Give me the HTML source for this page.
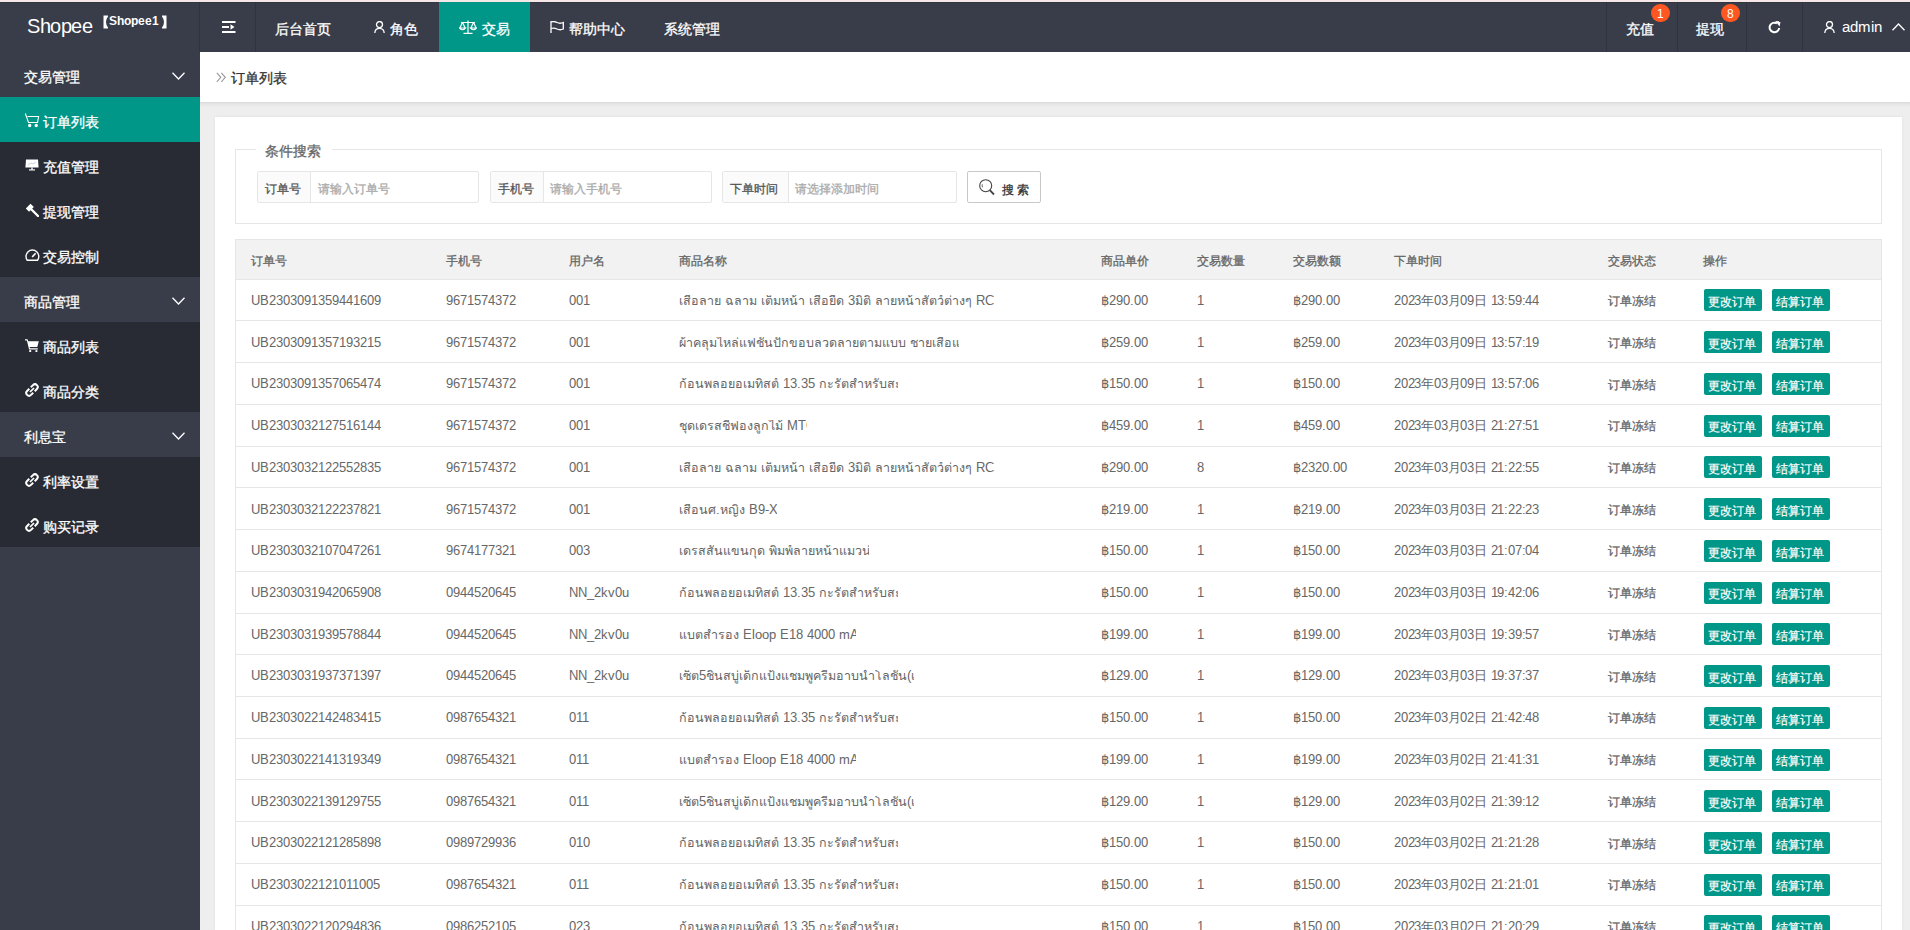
<!DOCTYPE html><html><head><meta charset="utf-8"><title>订单列表</title><style>@font-face{font-family:"Liberation Sans";src:local("Liberation Sans"),local("LiberationSans");font-weight:400}
@font-face{font-family:"Liberation Sans";src:local("Liberation Sans Bold"),local("LiberationSans-Bold");font-weight:700}
@font-face{font-family:"Liberation Sans";src:local("Liberation Sans"),local("LiberationSans");size-adjust:133.33%;unicode-range:U+2E80-9FFF,U+F900-FAFF,U+FF00-FFEF;font-weight:400}
@font-face{font-family:"Liberation Sans";src:local("Liberation Sans Bold"),local("LiberationSans-Bold");size-adjust:133.33%;unicode-range:U+2E80-9FFF,U+F900-FAFF,U+FF00-FFEF;font-weight:700}
@font-face{font-family:"Liberation Sans";src:local("Liberation Sans"),local("LiberationSans");size-adjust:72%;unicode-range:U+0E00-0E3E,U+0E40-0E7F;font-weight:400}

*{box-sizing:border-box}
html,body{margin:0;padding:0}
body{width:1910px;height:930px;overflow:hidden;position:relative;background:#eeeeee;font-family:"Liberation Sans",sans-serif;color:#666}
.a{position:absolute}
.t{position:absolute;white-space:nowrap;line-height:1}
.sep{position:absolute;top:0;width:1px;height:50px;background:#30333d}
.w14{color:#fff;font-size:14px;-webkit-text-stroke:0.3px #fff}
.grp{position:absolute;left:0;width:200px;height:45px;background:#393d49}
.sub{position:absolute;left:0;width:200px;background:#282b33}
.fs{position:absolute;left:235px;top:149px;width:1647px;height:75px;border:1px solid #e6e6e6}
.ig{position:absolute;top:171px;height:32px;border:1px solid #e6e6e6;background:#fff;border-radius:2px}
.ig .lb{position:absolute;left:0;top:0;height:30px;background:#fbfbfb;border-right:1px solid #e6e6e6}
.row{position:absolute;left:235px;width:1647px;border-left:1px solid #e6e6e6;border-right:1px solid #e6e6e6;border-bottom:1px solid #e6e6e6}
.td{color:#666;font-size:12.5px}
.c12{font-size:12px;color:#666;-webkit-text-stroke:0.3px #666}
.ck{-webkit-text-stroke:0.3px currentColor}
.btn{position:absolute;width:58px;height:22px;background:#009688;border-radius:2px}
.bt{color:#fff;font-size:12px;-webkit-text-stroke:0.2px #fff}
.th{overflow:hidden}
</style></head><body>
<div class="a" style="left:0;top:0;width:1910px;height:2px;background:#f5e8e6"></div>
<div class="a" style="left:0;top:2px;width:1910px;height:50px;background:#393d49">
<div class="a" style="left:0;top:0;width:1910px;height:1px;background:#33353f"></div>
<div class="sep" style="left:199px"></div><div class="sep" style="left:255px"></div>
<div class="a" style="left:439px;top:0;width:91px;height:50px;background:#009688"></div>
<div class="sep" style="left:1606px"></div>
<div class="sep" style="left:1677px"></div>
<div class="sep" style="left:1746px"></div>
<div class="sep" style="left:1802px"></div>
</div>
<div class="t" style="left:27px;top:16px;font-size:20px;color:#fff;letter-spacing:-0.4px">Shopee</div>
<svg class="a" style="left:103px;top:15px" width="64" height="14" viewBox="0 0 64 14"><path d="M0.5 0.5 H5 V1.5 Q3 4 3 7 Q3 10 5 12.5 V13.5 H0.5Z" fill="#fff"/><path d="M63.5 0.5 H59 V1.5 Q61 4 61 7 Q61 10 59 12.5 V13.5 H63.5Z" fill="#fff"/></svg>
<div class="t" style="left:109px;top:15px;font-size:12px;color:#fff;font-weight:bold">Shopee1</div>
<svg class="a" style="left:221.5px;top:21px" width="14" height="12" viewBox="0 0 14 12"><rect x="0" y="0" width="13.5" height="2" fill="#fff"/><rect x="0" y="5" width="7" height="2" fill="#fff"/><rect x="0" y="10" width="13.5" height="2" fill="#fff"/><path d="M8.5 3.3 L12.5 6 L8.5 8.7Z" fill="#fff"/></svg>
<div class="t w14" style="left:275px;top:21.5px">后台首页</div>
<div class="t w14" style="left:390px;top:21.5px">角色</div>
<div class="t w14" style="left:481.5px;top:21.5px">交易</div>
<div class="t w14" style="left:568.5px;top:21.5px">帮助中心</div>
<div class="t w14" style="left:664px;top:21.5px">系统管理</div>
<div class="t w14" style="left:1626px;top:21.5px">充值</div>
<div class="t w14" style="left:1696px;top:21.5px">提现</div>
<svg class="a" style="left:373.8px;top:20.5px" width="11" height="12.5" viewBox="0 0 11 12.5" fill="none" stroke="#fff" stroke-width="1.3"><circle cx="5.5" cy="3.6" r="3"/><path d="M0.8 12.5 Q0.8 7.3 5.5 7.3 Q10.2 7.3 10.2 12.5"/></svg>
<svg class="a" style="left:1824.2px;top:20.5px" width="11" height="12.5" viewBox="0 0 11 12.5" fill="none" stroke="#fff" stroke-width="1.3"><circle cx="5.5" cy="3.6" r="3"/><path d="M0.8 12.5 Q0.8 7.3 5.5 7.3 Q10.2 7.3 10.2 12.5"/></svg>
<svg class="a" style="left:458.5px;top:20px" width="18" height="14" viewBox="0 0 18 14" fill="none" stroke="#fff" stroke-width="1.2"><path d="M9 0.5 V13 M4.5 13.3 H13.5 M2 2.5 H16"/><path d="M3.5 2.5 L0.8 8 M3.5 2.5 L6.2 8 M14.5 2.5 L11.8 8 M14.5 2.5 L17.2 8"/><path d="M0.6 8 Q3.5 11.5 6.4 8Z M11.6 8 Q14.5 11.5 17.4 8Z"/></svg>
<svg class="a" style="left:550px;top:21px" width="14" height="12" viewBox="0 0 14 12" fill="none" stroke="#fff" stroke-width="1.3"><path d="M1 0 V12"/><path d="M1 1 Q4 0 7 1.5 Q10 3 13.3 1.5 V8 Q10 9.5 7 8 Q4 6.5 1 7.5"/></svg>
<div class="a" style="left:1651.0px;top:4.2px;width:19px;height:18px;border-radius:9.5px;background:#ff5722"></div>
<div class="t" style="left:1657.3px;top:8.5px;font-size:11.5px;color:#fff">1</div>
<div class="a" style="left:1721.1px;top:4.2px;width:19px;height:18px;border-radius:9.5px;background:#ff5722"></div>
<div class="t" style="left:1727.3999999999999px;top:8.5px;font-size:11.5px;color:#fff">8</div>
<svg class="a" style="left:1767.5px;top:20.5px" width="13" height="13" viewBox="0 0 13 13" fill="none" stroke="#fff" stroke-width="2"><path d="M11.2 7 A4.8 4.8 0 1 1 9 2.4"/><path d="M7.2 0 L12.6 0.3 L11.6 5.4Z" fill="#fff" stroke="none"/></svg>
<div class="t" style="left:1842px;top:19px;font-size:15px;color:#fff">admin</div>
<svg class="a" style="left:1891.5px;top:22.5px" width="13" height="8" viewBox="0 0 13 8" fill="none" stroke="#fff" stroke-width="1.3"><path d="M0.5 7.3 L6.5 1 L12.5 7.3"/></svg>
<div class="a" style="left:0;top:52px;width:200px;height:878px;background:#393d49"></div>
<div class="grp" style="top:52px"></div>
<div class="t w14" style="left:23.5px;top:70.3px">交易管理</div>
<svg class="a" style="left:171.5px;top:71.6px" width="13" height="8" viewBox="0 0 13 8" fill="none" stroke="#fff" stroke-width="1.3"><path d="M0.5 0.7 L6.5 7 L12.5 0.7"/></svg>
<div class="sub" style="top:97px;height:180px"></div>
<div class="a" style="left:0;top:97px;width:200px;height:45px;background:#009688"></div>
<div class="t w14" style="left:43.3px;top:114.5px">订单列表</div>
<div class="t w14" style="left:43.3px;top:159.5px">充值管理</div>
<div class="t w14" style="left:43.3px;top:204.5px">提现管理</div>
<div class="t w14" style="left:43.3px;top:249.5px">交易控制</div>
<div class="grp" style="top:277px"></div>
<div class="t w14" style="left:23.5px;top:295.3px">商品管理</div>
<svg class="a" style="left:171.5px;top:296.6px" width="13" height="8" viewBox="0 0 13 8" fill="none" stroke="#fff" stroke-width="1.3"><path d="M0.5 0.7 L6.5 7 L12.5 0.7"/></svg>
<div class="sub" style="top:322px;height:90px"></div>
<div class="t w14" style="left:43.3px;top:339.5px">商品列表</div>
<div class="t w14" style="left:43.3px;top:384.5px">商品分类</div>
<div class="grp" style="top:412px"></div>
<div class="t w14" style="left:23.5px;top:430.3px">利息宝</div>
<svg class="a" style="left:171.5px;top:431.6px" width="13" height="8" viewBox="0 0 13 8" fill="none" stroke="#fff" stroke-width="1.3"><path d="M0.5 0.7 L6.5 7 L12.5 0.7"/></svg>
<div class="sub" style="top:457px;height:90px"></div>
<div class="t w14" style="left:43.3px;top:474.5px">利率设置</div>
<div class="t w14" style="left:43.3px;top:519.5px">购买记录</div>
<svg class="a" style="left:24.5px;top:112.5px" width="15" height="15" viewBox="0 0 15 15" fill="none" stroke="#fff" stroke-width="1.1"><path d="M0.3 0.5 L3.5 9.5 H12.5 L13.6 3.5 H2.5"/><circle cx="4.7" cy="12.5" r="1.1" fill="#fff"/><circle cx="11.2" cy="12.5" r="1.1" fill="#fff"/></svg>
<svg class="a" style="left:25px;top:159px" width="14" height="12" viewBox="0 0 14 12"><path d="M1 0.5 H13 L13.6 8.5 H0.4Z" fill="#fff"/><rect x="6.3" y="8.5" width="1.4" height="2" fill="#fff"/><rect x="4" y="10.3" width="6" height="1.2" fill="#fff"/><path d="M3 6 L6 4 L8 5 L11 3" stroke="#aab" stroke-width="0.6" fill="none"/></svg>
<svg class="a" style="left:25px;top:203px" width="14" height="14" viewBox="0 0 14 14"><path d="M0.8 5.5 L5.5 0.8 L8.8 4.1 L4.1 8.8Z" fill="#fff"/><path d="M6.5 6.5 L13 13" stroke="#fff" stroke-width="2.4" stroke-linecap="round"/></svg>
<svg class="a" style="left:24.5px;top:248px" width="15" height="14" viewBox="0 0 15 14" fill="none" stroke="#fff" stroke-width="1.4"><path d="M2.3 12.3 A6.4 6.4 0 1 1 12.5 12.3 Z"/><path d="M7.2 9 L10.6 5.2" stroke-width="1.7"/></svg>
<svg class="a" style="left:25px;top:339px" width="14" height="13" viewBox="0 0 14 13"><path d="M0 0.3 H2.5 L3.3 2.2 H13.8 L12.3 8 H4.6 L5 9.3 H12.8 V10.4 H4.1 L1.9 1.4 H0Z" fill="#fff"/><circle cx="5.2" cy="12" r="1.1" fill="#fff"/><circle cx="11.4" cy="12" r="1.1" fill="#fff"/></svg>
<svg class="a" style="left:25px;top:382.5px" width="14" height="14" viewBox="0 0 14 14" fill="none" stroke="#fff" stroke-width="2"><path d="M5.8 4.3 L8 2.1 A2.4 2.4 0 0 1 11.9 6 L9.7 8.2"/><path d="M8.2 9.7 L6 11.9 A2.4 2.4 0 0 1 2.1 8 L4.3 5.8"/><path d="M5 9 L9 5" stroke-width="1.7"/></svg>
<svg class="a" style="left:25px;top:472.5px" width="14" height="14" viewBox="0 0 14 14" fill="none" stroke="#fff" stroke-width="2"><path d="M5.8 4.3 L8 2.1 A2.4 2.4 0 0 1 11.9 6 L9.7 8.2"/><path d="M8.2 9.7 L6 11.9 A2.4 2.4 0 0 1 2.1 8 L4.3 5.8"/><path d="M5 9 L9 5" stroke-width="1.7"/></svg>
<svg class="a" style="left:25px;top:517.5px" width="14" height="14" viewBox="0 0 14 14" fill="none" stroke="#fff" stroke-width="2"><path d="M5.8 4.3 L8 2.1 A2.4 2.4 0 0 1 11.9 6 L9.7 8.2"/><path d="M8.2 9.7 L6 11.9 A2.4 2.4 0 0 1 2.1 8 L4.3 5.8"/><path d="M5 9 L9 5" stroke-width="1.7"/></svg>
<div class="a" style="left:200px;top:52px;width:1710px;height:50px;background:#fff;"></div>
<div class="a" style="left:200px;top:102px;width:1710px;height:5px;background:linear-gradient(#d9d9d9,#e4e4e4 35%,#eeeeee)"></div>
<svg class="a" style="left:215.5px;top:72px" width="11" height="11" viewBox="0 0 11 11" fill="none" stroke="#999" stroke-width="1.1"><path d="M0.8 0.8 L4.8 5.3 L0.8 9.8 M5.3 0.8 L9.3 5.3 L5.3 9.8"/></svg>
<div class="t ck" style="left:231px;top:71.4px;font-size:14px;color:#333">订单列表</div>
<div class="a" style="left:215px;top:117px;width:1687px;height:813px;background:#fff;box-shadow:0 0 3px rgba(0,0,0,.07)"></div>
<div class="fs"></div>
<div class="a" style="left:256px;top:140px;width:76px;height:18px;background:#fff"></div>
<div class="t ck" style="left:265px;top:143.5px;font-size:14px;color:#666">条件搜索</div>
<div class="ig" style="left:256.5px;width:222.0px"><div class="lb" style="width:53.5px"></div></div>
<div class="t ck" style="left:264.5px;top:183.3px;font-size:12px;color:#555">订单号</div>
<div class="t ck" style="left:317.5px;top:183.3px;font-size:12px;color:#aaa">请输入订单号</div>
<div class="ig" style="left:489.5px;width:222.10000000000002px"><div class="lb" style="width:53.0px"></div></div>
<div class="t ck" style="left:497.5px;top:183.3px;font-size:12px;color:#555">手机号</div>
<div class="t ck" style="left:550px;top:183.3px;font-size:12px;color:#aaa">请输入手机号</div>
<div class="ig" style="left:722.3px;width:234.30000000000007px"><div class="lb" style="width:65.5px"></div></div>
<div class="t ck" style="left:730.3px;top:183.3px;font-size:12px;color:#555">下单时间</div>
<div class="t ck" style="left:795.3px;top:183.3px;font-size:12px;color:#aaa">请选择添加时间</div>
<div class="a" style="left:967px;top:171px;width:74px;height:32px;border:1px solid #c9c9c9;border-radius:2px;background:#fff"></div>
<svg class="a" style="left:979px;top:178.5px" width="17" height="17" viewBox="0 0 17 17" fill="none" stroke="#444" stroke-width="1.1"><circle cx="6.7" cy="6.7" r="6"/><path d="M10.8 11.2 L15 15.5" stroke-width="1.8"/><path d="M3.3 5.3 A3.6 3.6 0 0 0 3.6 8.3" stroke="#556" stroke-width="0.9"/></svg>
<div class="t ck" style="left:1001.6px;top:183.6px;font-size:12px;color:#333;letter-spacing:3.7px">搜索</div>
<div class="a" style="left:235px;top:239px;width:1647px;height:40.69999999999999px;background:#f2f2f2;border:1px solid #e6e6e6"></div>
<div class="t c12" style="left:250.5px;top:255px">订单号</div>
<div class="t c12" style="left:445.7px;top:255px">手机号</div>
<div class="t c12" style="left:569px;top:255px">用户名</div>
<div class="t c12" style="left:678.7px;top:255px">商品名称</div>
<div class="t c12" style="left:1101.3px;top:255px">商品单价</div>
<div class="t c12" style="left:1197px;top:255px">交易数量</div>
<div class="t c12" style="left:1293px;top:255px">交易数额</div>
<div class="t c12" style="left:1394px;top:255px">下单时间</div>
<div class="t c12" style="left:1607.5px;top:255px">交易状态</div>
<div class="t c12" style="left:1703px;top:255px">操作</div>
<div class="row" style="top:278.70px;height:42.73px"></div>
<div class="t td" style="left:250.5px;top:294.87px">UB2303091359441609</div>
<div class="t td" style="left:445.7px;top:294.87px">9671574372</div>
<div class="t td" style="left:569px;top:294.87px">001</div>
<div class="t td th" style="left:679.2px;top:294.87px;width:315px;height:14px">เสื้อลาย ฉลาม เต็มหน้า เสื้อยืด 3มิติ ลายหน้าสัตว์ต่างๆ RCA223</div>
<div class="t td" style="left:1101.3px;top:294.87px">฿290.00</div>
<div class="t td" style="left:1197px;top:294.87px">1</div>
<div class="t td" style="left:1293px;top:294.87px">฿290.00</div>
<div class="t td" style="left:1394px;top:294.87px;letter-spacing:-0.2px">2023年03月09日 13:59:44</div>
<div class="t c12" style="left:1607.5px;top:295.06px">订单冻结</div>
<div class="btn" style="left:1704px;top:289.46px"></div>
<div class="t bt" style="left:1708px;top:296.26px">更改订单</div>
<div class="btn" style="left:1772px;top:289.46px"></div>
<div class="t bt" style="left:1776px;top:296.26px">结算订单</div>
<div class="row" style="top:320.43px;height:42.73px"></div>
<div class="t td" style="left:250.5px;top:336.60px">UB2303091357193215</div>
<div class="t td" style="left:445.7px;top:336.60px">9671574372</div>
<div class="t td" style="left:569px;top:336.60px">001</div>
<div class="t td th" style="left:679.2px;top:336.60px;width:280px;height:14px">ผ้าคลุมไหล่แฟชั่นปักขอบลวดลายตามแบบ ชายเสื้อแต่งพู่</div>
<div class="t td" style="left:1101.3px;top:336.60px">฿259.00</div>
<div class="t td" style="left:1197px;top:336.60px">1</div>
<div class="t td" style="left:1293px;top:336.60px">฿259.00</div>
<div class="t td" style="left:1394px;top:336.60px;letter-spacing:-0.2px">2023年03月09日 13:57:19</div>
<div class="t c12" style="left:1607.5px;top:336.80px">订单冻结</div>
<div class="btn" style="left:1704px;top:331.19px"></div>
<div class="t bt" style="left:1708px;top:338.00px">更改订单</div>
<div class="btn" style="left:1772px;top:331.19px"></div>
<div class="t bt" style="left:1776px;top:338.00px">结算订单</div>
<div class="row" style="top:362.16px;height:42.73px"></div>
<div class="t td" style="left:250.5px;top:378.32px">UB2303091357065474</div>
<div class="t td" style="left:445.7px;top:378.32px">9671574372</div>
<div class="t td" style="left:569px;top:378.32px">001</div>
<div class="t td th" style="left:679.2px;top:378.32px;width:219px;height:14px">ก้อนพลอยอเมทิสต์ 13.35 กะรัตสำหรับสะสม</div>
<div class="t td" style="left:1101.3px;top:378.32px">฿150.00</div>
<div class="t td" style="left:1197px;top:378.32px">1</div>
<div class="t td" style="left:1293px;top:378.32px">฿150.00</div>
<div class="t td" style="left:1394px;top:378.32px;letter-spacing:-0.2px">2023年03月09日 13:57:06</div>
<div class="t c12" style="left:1607.5px;top:378.52px">订单冻结</div>
<div class="btn" style="left:1704px;top:372.92px"></div>
<div class="t bt" style="left:1708px;top:379.72px">更改订单</div>
<div class="btn" style="left:1772px;top:372.92px"></div>
<div class="t bt" style="left:1776px;top:379.72px">结算订单</div>
<div class="row" style="top:403.89px;height:42.73px"></div>
<div class="t td" style="left:250.5px;top:420.06px">UB2303032127516144</div>
<div class="t td" style="left:445.7px;top:420.06px">9671574372</div>
<div class="t td" style="left:569px;top:420.06px">001</div>
<div class="t td th" style="left:679.2px;top:420.06px;width:128px;height:14px">ชุดเดรสชีฟองลูกไม้ MTO</div>
<div class="t td" style="left:1101.3px;top:420.06px">฿459.00</div>
<div class="t td" style="left:1197px;top:420.06px">1</div>
<div class="t td" style="left:1293px;top:420.06px">฿459.00</div>
<div class="t td" style="left:1394px;top:420.06px;letter-spacing:-0.2px">2023年03月03日 21:27:51</div>
<div class="t c12" style="left:1607.5px;top:420.25px">订单冻结</div>
<div class="btn" style="left:1704px;top:414.65px"></div>
<div class="t bt" style="left:1708px;top:421.45px">更改订单</div>
<div class="btn" style="left:1772px;top:414.65px"></div>
<div class="t bt" style="left:1776px;top:421.45px">结算订单</div>
<div class="row" style="top:445.62px;height:42.73px"></div>
<div class="t td" style="left:250.5px;top:461.79px">UB2303032122552835</div>
<div class="t td" style="left:445.7px;top:461.79px">9671574372</div>
<div class="t td" style="left:569px;top:461.79px">001</div>
<div class="t td th" style="left:679.2px;top:461.79px;width:315px;height:14px">เสื้อลาย ฉลาม เต็มหน้า เสื้อยืด 3มิติ ลายหน้าสัตว์ต่างๆ RCA223</div>
<div class="t td" style="left:1101.3px;top:461.79px">฿290.00</div>
<div class="t td" style="left:1197px;top:461.79px">8</div>
<div class="t td" style="left:1293px;top:461.79px">฿2320.00</div>
<div class="t td" style="left:1394px;top:461.79px;letter-spacing:-0.2px">2023年03月03日 21:22:55</div>
<div class="t c12" style="left:1607.5px;top:461.99px">订单冻结</div>
<div class="btn" style="left:1704px;top:456.38px"></div>
<div class="t bt" style="left:1708px;top:463.19px">更改订单</div>
<div class="btn" style="left:1772px;top:456.38px"></div>
<div class="t bt" style="left:1776px;top:463.19px">结算订单</div>
<div class="row" style="top:487.35px;height:42.73px"></div>
<div class="t td" style="left:250.5px;top:503.51px">UB2303032122237821</div>
<div class="t td" style="left:445.7px;top:503.51px">9671574372</div>
<div class="t td" style="left:569px;top:503.51px">001</div>
<div class="t td th" style="left:679.2px;top:503.51px;width:98px;height:14px">เสื้อนศ.หญิง B9-XL</div>
<div class="t td" style="left:1101.3px;top:503.51px">฿219.00</div>
<div class="t td" style="left:1197px;top:503.51px">1</div>
<div class="t td" style="left:1293px;top:503.51px">฿219.00</div>
<div class="t td" style="left:1394px;top:503.51px;letter-spacing:-0.2px">2023年03月03日 21:22:23</div>
<div class="t c12" style="left:1607.5px;top:503.71px">订单冻结</div>
<div class="btn" style="left:1704px;top:498.11px"></div>
<div class="t bt" style="left:1708px;top:504.91px">更改订单</div>
<div class="btn" style="left:1772px;top:498.11px"></div>
<div class="t bt" style="left:1776px;top:504.91px">结算订单</div>
<div class="row" style="top:529.08px;height:42.73px"></div>
<div class="t td" style="left:250.5px;top:545.24px">UB2303032107047261</div>
<div class="t td" style="left:445.7px;top:545.24px">9674177321</div>
<div class="t td" style="left:569px;top:545.24px">003</div>
<div class="t td th" style="left:679.2px;top:545.24px;width:190px;height:14px">เดรสสั้นแขนกุด พิมพ์ลายหน้าแมวน่ารัก</div>
<div class="t td" style="left:1101.3px;top:545.24px">฿150.00</div>
<div class="t td" style="left:1197px;top:545.24px">1</div>
<div class="t td" style="left:1293px;top:545.24px">฿150.00</div>
<div class="t td" style="left:1394px;top:545.24px;letter-spacing:-0.2px">2023年03月03日 21:07:04</div>
<div class="t c12" style="left:1607.5px;top:545.44px">订单冻结</div>
<div class="btn" style="left:1704px;top:539.84px"></div>
<div class="t bt" style="left:1708px;top:546.64px">更改订单</div>
<div class="btn" style="left:1772px;top:539.84px"></div>
<div class="t bt" style="left:1776px;top:546.64px">结算订单</div>
<div class="row" style="top:570.81px;height:42.73px"></div>
<div class="t td" style="left:250.5px;top:586.97px">UB2303031942065908</div>
<div class="t td" style="left:445.7px;top:586.97px">0944520645</div>
<div class="t td" style="left:569px;top:586.97px">NN_2kv0u</div>
<div class="t td th" style="left:679.2px;top:586.97px;width:219px;height:14px">ก้อนพลอยอเมทิสต์ 13.35 กะรัตสำหรับสะสม</div>
<div class="t td" style="left:1101.3px;top:586.97px">฿150.00</div>
<div class="t td" style="left:1197px;top:586.97px">1</div>
<div class="t td" style="left:1293px;top:586.97px">฿150.00</div>
<div class="t td" style="left:1394px;top:586.97px;letter-spacing:-0.2px">2023年03月03日 19:42:06</div>
<div class="t c12" style="left:1607.5px;top:587.17px">订单冻结</div>
<div class="btn" style="left:1704px;top:581.57px"></div>
<div class="t bt" style="left:1708px;top:588.38px">更改订单</div>
<div class="btn" style="left:1772px;top:581.57px"></div>
<div class="t bt" style="left:1776px;top:588.38px">结算订单</div>
<div class="row" style="top:612.54px;height:42.73px"></div>
<div class="t td" style="left:250.5px;top:628.70px">UB2303031939578844</div>
<div class="t td" style="left:445.7px;top:628.70px">0944520645</div>
<div class="t td" style="left:569px;top:628.70px">NN_2kv0u</div>
<div class="t td th" style="left:679.2px;top:628.70px;width:177px;height:14px">แบตสำรอง Eloop E18 4000 mAh</div>
<div class="t td" style="left:1101.3px;top:628.70px">฿199.00</div>
<div class="t td" style="left:1197px;top:628.70px">1</div>
<div class="t td" style="left:1293px;top:628.70px">฿199.00</div>
<div class="t td" style="left:1394px;top:628.70px;letter-spacing:-0.2px">2023年03月03日 19:39:57</div>
<div class="t c12" style="left:1607.5px;top:628.90px">订单冻结</div>
<div class="btn" style="left:1704px;top:623.30px"></div>
<div class="t bt" style="left:1708px;top:630.11px">更改订单</div>
<div class="btn" style="left:1772px;top:623.30px"></div>
<div class="t bt" style="left:1776px;top:630.11px">结算订单</div>
<div class="row" style="top:654.27px;height:42.73px"></div>
<div class="t td" style="left:250.5px;top:670.43px">UB2303031937371397</div>
<div class="t td" style="left:445.7px;top:670.43px">0944520645</div>
<div class="t td" style="left:569px;top:670.43px">NN_2kv0u</div>
<div class="t td th" style="left:679.2px;top:670.43px;width:235px;height:14px">เซ็ต5ชิ้นสบู่เด็กแป้งแชมพูครีมอาบน้ำโลชั่น(เล็ก)</div>
<div class="t td" style="left:1101.3px;top:670.43px">฿129.00</div>
<div class="t td" style="left:1197px;top:670.43px">1</div>
<div class="t td" style="left:1293px;top:670.43px">฿129.00</div>
<div class="t td" style="left:1394px;top:670.43px;letter-spacing:-0.2px">2023年03月03日 19:37:37</div>
<div class="t c12" style="left:1607.5px;top:670.63px">订单冻结</div>
<div class="btn" style="left:1704px;top:665.03px"></div>
<div class="t bt" style="left:1708px;top:671.84px">更改订单</div>
<div class="btn" style="left:1772px;top:665.03px"></div>
<div class="t bt" style="left:1776px;top:671.84px">结算订单</div>
<div class="row" style="top:696.00px;height:42.73px"></div>
<div class="t td" style="left:250.5px;top:712.16px">UB2303022142483415</div>
<div class="t td" style="left:445.7px;top:712.16px">0987654321</div>
<div class="t td" style="left:569px;top:712.16px">011</div>
<div class="t td th" style="left:679.2px;top:712.16px;width:219px;height:14px">ก้อนพลอยอเมทิสต์ 13.35 กะรัตสำหรับสะสม</div>
<div class="t td" style="left:1101.3px;top:712.16px">฿150.00</div>
<div class="t td" style="left:1197px;top:712.16px">1</div>
<div class="t td" style="left:1293px;top:712.16px">฿150.00</div>
<div class="t td" style="left:1394px;top:712.16px;letter-spacing:-0.2px">2023年03月02日 21:42:48</div>
<div class="t c12" style="left:1607.5px;top:712.37px">订单冻结</div>
<div class="btn" style="left:1704px;top:706.76px"></div>
<div class="t bt" style="left:1708px;top:713.57px">更改订单</div>
<div class="btn" style="left:1772px;top:706.76px"></div>
<div class="t bt" style="left:1776px;top:713.57px">结算订单</div>
<div class="row" style="top:737.73px;height:42.73px"></div>
<div class="t td" style="left:250.5px;top:753.89px">UB2303022141319349</div>
<div class="t td" style="left:445.7px;top:753.89px">0987654321</div>
<div class="t td" style="left:569px;top:753.89px">011</div>
<div class="t td th" style="left:679.2px;top:753.89px;width:177px;height:14px">แบตสำรอง Eloop E18 4000 mAh</div>
<div class="t td" style="left:1101.3px;top:753.89px">฿199.00</div>
<div class="t td" style="left:1197px;top:753.89px">1</div>
<div class="t td" style="left:1293px;top:753.89px">฿199.00</div>
<div class="t td" style="left:1394px;top:753.89px;letter-spacing:-0.2px">2023年03月02日 21:41:31</div>
<div class="t c12" style="left:1607.5px;top:754.10px">订单冻结</div>
<div class="btn" style="left:1704px;top:748.50px"></div>
<div class="t bt" style="left:1708px;top:755.30px">更改订单</div>
<div class="btn" style="left:1772px;top:748.50px"></div>
<div class="t bt" style="left:1776px;top:755.30px">结算订单</div>
<div class="row" style="top:779.46px;height:42.73px"></div>
<div class="t td" style="left:250.5px;top:795.62px">UB2303022139129755</div>
<div class="t td" style="left:445.7px;top:795.62px">0987654321</div>
<div class="t td" style="left:569px;top:795.62px">011</div>
<div class="t td th" style="left:679.2px;top:795.62px;width:235px;height:14px">เซ็ต5ชิ้นสบู่เด็กแป้งแชมพูครีมอาบน้ำโลชั่น(เล็ก)</div>
<div class="t td" style="left:1101.3px;top:795.62px">฿129.00</div>
<div class="t td" style="left:1197px;top:795.62px">1</div>
<div class="t td" style="left:1293px;top:795.62px">฿129.00</div>
<div class="t td" style="left:1394px;top:795.62px;letter-spacing:-0.2px">2023年03月02日 21:39:12</div>
<div class="t c12" style="left:1607.5px;top:795.83px">订单冻结</div>
<div class="btn" style="left:1704px;top:790.23px"></div>
<div class="t bt" style="left:1708px;top:797.03px">更改订单</div>
<div class="btn" style="left:1772px;top:790.23px"></div>
<div class="t bt" style="left:1776px;top:797.03px">结算订单</div>
<div class="row" style="top:821.19px;height:42.73px"></div>
<div class="t td" style="left:250.5px;top:837.36px">UB2303022121285898</div>
<div class="t td" style="left:445.7px;top:837.36px">0989729936</div>
<div class="t td" style="left:569px;top:837.36px">010</div>
<div class="t td th" style="left:679.2px;top:837.36px;width:219px;height:14px">ก้อนพลอยอเมทิสต์ 13.35 กะรัตสำหรับสะสม</div>
<div class="t td" style="left:1101.3px;top:837.36px">฿150.00</div>
<div class="t td" style="left:1197px;top:837.36px">1</div>
<div class="t td" style="left:1293px;top:837.36px">฿150.00</div>
<div class="t td" style="left:1394px;top:837.36px;letter-spacing:-0.2px">2023年03月02日 21:21:28</div>
<div class="t c12" style="left:1607.5px;top:837.56px">订单冻结</div>
<div class="btn" style="left:1704px;top:831.96px"></div>
<div class="t bt" style="left:1708px;top:838.76px">更改订单</div>
<div class="btn" style="left:1772px;top:831.96px"></div>
<div class="t bt" style="left:1776px;top:838.76px">结算订单</div>
<div class="row" style="top:862.92px;height:42.73px"></div>
<div class="t td" style="left:250.5px;top:879.08px">UB2303022121011005</div>
<div class="t td" style="left:445.7px;top:879.08px">0987654321</div>
<div class="t td" style="left:569px;top:879.08px">011</div>
<div class="t td th" style="left:679.2px;top:879.08px;width:219px;height:14px">ก้อนพลอยอเมทิสต์ 13.35 กะรัตสำหรับสะสม</div>
<div class="t td" style="left:1101.3px;top:879.08px">฿150.00</div>
<div class="t td" style="left:1197px;top:879.08px">1</div>
<div class="t td" style="left:1293px;top:879.08px">฿150.00</div>
<div class="t td" style="left:1394px;top:879.08px;letter-spacing:-0.2px">2023年03月02日 21:21:01</div>
<div class="t c12" style="left:1607.5px;top:879.28px">订单冻结</div>
<div class="btn" style="left:1704px;top:873.68px"></div>
<div class="t bt" style="left:1708px;top:880.48px">更改订单</div>
<div class="btn" style="left:1772px;top:873.68px"></div>
<div class="t bt" style="left:1776px;top:880.48px">结算订单</div>
<div class="row" style="top:904.65px;height:42.73px"></div>
<div class="t td" style="left:250.5px;top:920.81px">UB2303022120294836</div>
<div class="t td" style="left:445.7px;top:920.81px">0986252105</div>
<div class="t td" style="left:569px;top:920.81px">023</div>
<div class="t td th" style="left:679.2px;top:920.81px;width:219px;height:14px">ก้อนพลอยอเมทิสต์ 13.35 กะรัตสำหรับสะสม</div>
<div class="t td" style="left:1101.3px;top:920.81px">฿150.00</div>
<div class="t td" style="left:1197px;top:920.81px">1</div>
<div class="t td" style="left:1293px;top:920.81px">฿150.00</div>
<div class="t td" style="left:1394px;top:920.81px;letter-spacing:-0.2px">2023年03月02日 21:20:29</div>
<div class="t c12" style="left:1607.5px;top:921.01px">订单冻结</div>
<div class="btn" style="left:1704px;top:915.41px"></div>
<div class="t bt" style="left:1708px;top:922.21px">更改订单</div>
<div class="btn" style="left:1772px;top:915.41px"></div>
<div class="t bt" style="left:1776px;top:922.21px">结算订单</div>
</body></html>
